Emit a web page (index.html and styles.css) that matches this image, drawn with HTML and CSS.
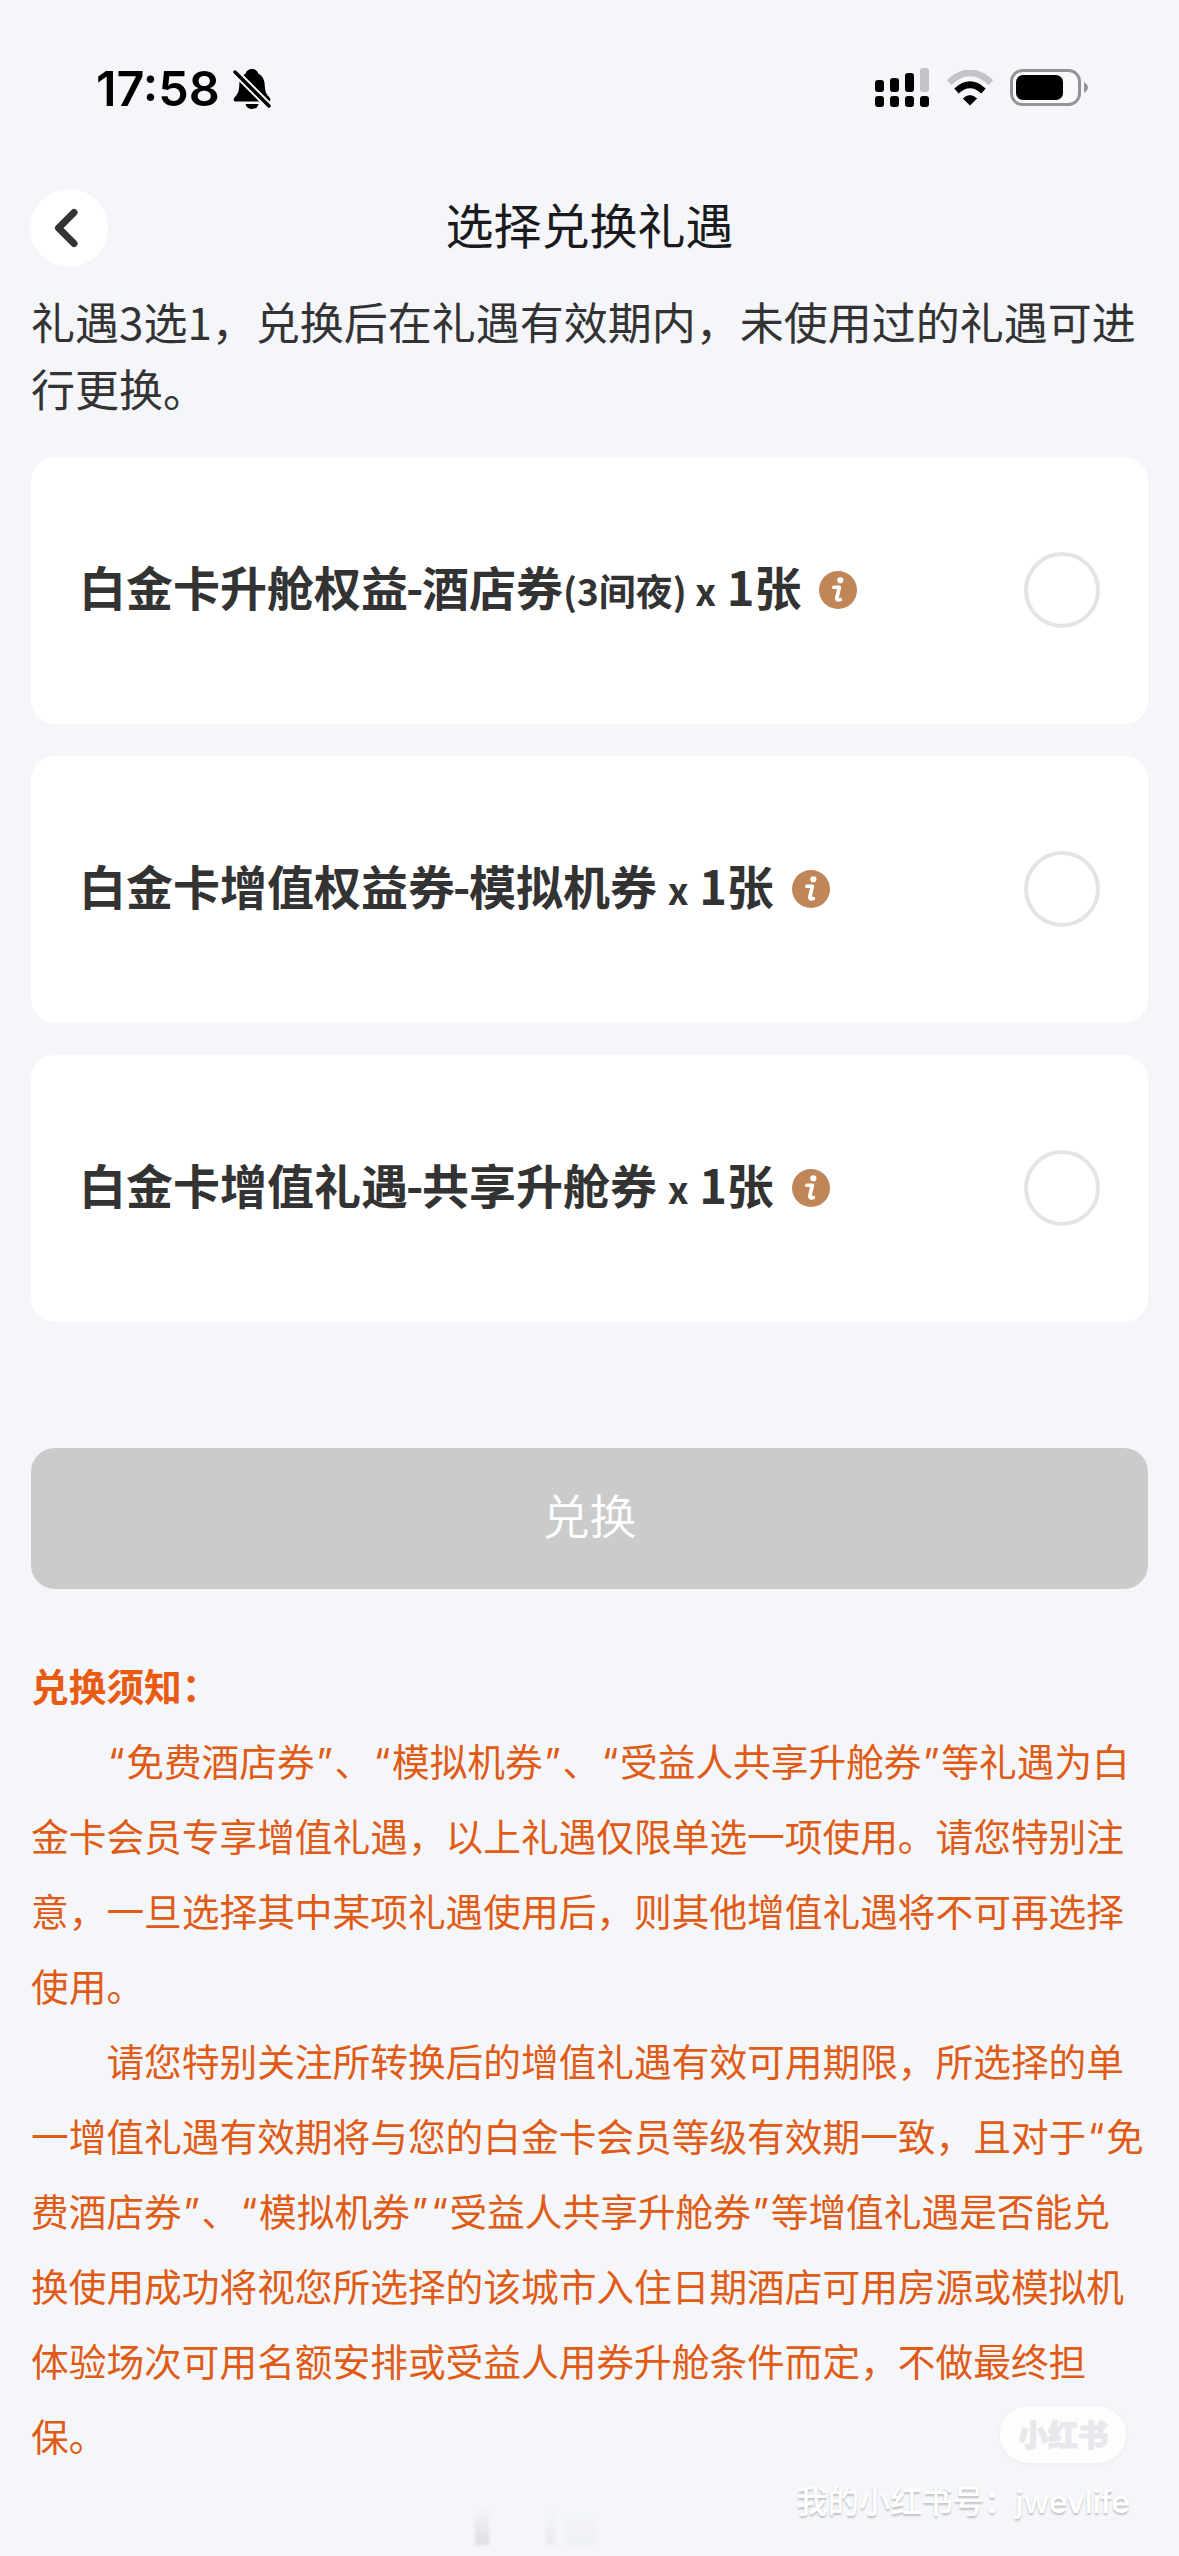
FILE: index.html
```html
<!DOCTYPE html>
<html lang="zh-CN">
<head>
<meta charset="utf-8">
<title>选择兑换礼遇</title>
<link rel="stylesheet" href="styles.css">
</head>
<body>
<svg width="0" height="0" class="defs">
  <symbol id="info" viewBox="0 0 37 37">
    <circle cx="18.500" cy="18.500" r="18.500" fill="#c18657"/>
    <circle cx="20.800" cy="9" r="3" fill="#fff"/>
    <path d="M14.500 15.800H19.800L17.300 26.500Q17.200 29 20.800 27.800" fill="none" stroke="#fff" stroke-width="3.600" stroke-linecap="round" stroke-linejoin="round"/>
  </symbol>
</svg>
<div class="screen">
  <div class="status">
    <div class="status-left">
      <span class="time">17:58</span>
      <svg class="bell" viewBox="0 0 38 42" width="38" height="42">
        <path d="M19 1c-3.600 0-5.800 2.200-6.200 4.600C8 8 6.500 12.500 6.300 17c-.3 6-1.300 8.500-4 11.500C-.5 31.500.5 33.500 3 33.500h32c2.500 0 3.500-2 .7-5-2.700-3-3.700-5.500-4-11.500-.2-4.500-1.700-9-6.500-11.400C24.800 3.200 22.600 1 19 1z"/>
        <path d="M12.500 36h13c-.8 3.300-3.200 5-6.500 5s-5.700-1.700-6.500-5z"/>
        <path d="M2 4 36 38" stroke="#f4f6fa" stroke-width="7.500"/>
        <path d="M2 4 36 38" stroke="#000" stroke-width="3.400" stroke-linecap="round"/>
      </svg>
    </div>
    <div class="status-right">
      <svg viewBox="0 0 54 40" width="54" height="40">
        <rect y="12" width="9" height="12" rx="3"/><rect x="15" y="10" width="9" height="14" rx="3"/><rect x="30" y="5" width="9" height="19" rx="3"/><rect x="45" y="0" width="9" height="24" rx="3" fill="#c3c4c7"/>
        <rect y="28" width="9" height="11" rx="3"/><rect x="15" y="28" width="9" height="11" rx="3"/><rect x="30" y="28" width="9" height="11" rx="3"/><rect x="45" y="28" width="9" height="11" rx="3"/>
      </svg>
      <svg class="wifi" viewBox="0 0 48 36" width="48" height="36">
        <path d="M3 12.500Q24-7 45 12.500" fill="none" stroke="#c3c4c7" stroke-width="6.500"/>
        <path d="M10.500 21Q24 8.500 37.500 21" fill="none" stroke="#000" stroke-width="6.500"/>
        <path d="M16.800 28.500Q24 21.500 31.200 28.500L24 35.500Z"/>
      </svg>
      <svg class="battery" viewBox="0 0 78 37" width="78" height="37">
        <rect x="1.500" y="1.500" width="68" height="34" rx="11" fill="#f9fafc" stroke="#929397" stroke-width="3"/>
        <rect x="6" y="6" width="47" height="25" rx="7"/>
        <path d="M74 13q4 3 4 5.500T74 24z" fill="#929397"/>
      </svg>
    </div>
  </div>

  <header class="nav">
    <div class="back">
      <svg viewBox="0 0 24 40" width="24" height="40"><path d="M20 4.500 4.500 20 20 35.500" fill="none" stroke="#333" stroke-width="7" stroke-linecap="round" stroke-linejoin="round"/></svg>
    </div>
    <h1 class="title">选择兑换礼遇</h1>
  </header>

  <p class="intro">礼遇3选1，兑换后在礼遇有效期内，未使用过的礼遇可进<br>行更换。</p>

  <div class="cards">
    <div class="card">
      <div class="name">白金卡升舱权益<span class="dash">-</span>酒店券<small>(3间夜) x</small> 1张</div>
      <svg class="info"><use href="#info"/></svg>
      <span class="radio"></span>
    </div>
    <div class="card">
      <div class="name">白金卡增值权益券<span class="dash">-</span>模拟机券 <small>x</small> 1张</div>
      <svg class="info"><use href="#info"/></svg>
      <span class="radio"></span>
    </div>
    <div class="card">
      <div class="name">白金卡增值礼遇<span class="dash">-</span>共享升舱券 <small>x</small> 1张</div>
      <svg class="info"><use href="#info"/></svg>
      <span class="radio"></span>
    </div>
  </div>

  <div class="submit">兑换</div>

  <section class="notice">
    <h2>兑换须知：</h2>
    <p class="indent"><q>“</q>免费酒店券<q>”</q>、<q>“</q>模拟机券<q>”</q>、<q>“</q>受益人共享升舱券<q>”</q>等礼遇为白<br>金卡会员专享增值礼遇，以上礼遇仅限单选一项使用。请您特别注<br>意，一旦选择其中某项礼遇使用后，则其他增值礼遇将不可再选择<br>使用。</p>
    <p class="indent">请您特别关注所转换后的增值礼遇有效可用期限，所选择的单<br>一增值礼遇有效期将与您的白金卡会员等级有效期一致，且对于<q>“</q>免<br>费酒店券<q>”</q>、<q>“</q>模拟机券<q>”</q><q>“</q>受益人共享升舱券<q>”</q>等增值礼遇是否能兑<br>换使用成功将视您所选择的该城市入住日期酒店可用房源或模拟机<br>体验场次可用名额安排或受益人用券升舱条件而定，不做最终担<br>保。</p>
  </section>

  <div class="watermark">
    <span class="pill">小红书</span>
    <span class="account">我的小红书号：<span class="id">jwevlife</span></span>
  </div>
  <div class="ghost"><i class="g1"></i><i class="g2"></i><i class="g3"></i></div>
</div>
</body>
</html>
```
FILE: styles.css
```css
* { box-sizing: border-box; }
body { margin: 0; background: #f4f6fa; }
h1, h2, p { margin: 0; font-weight: 400; }
svg { display: block; }
.defs { position: absolute; }

.screen {
  position: relative;
  width: 1179px;
  height: 2556px;
  padding: 0 31px;
  overflow: hidden;
  background: #f4f6fa;
  color: #333;
  font-family: "Noto Sans CJK SC", sans-serif;
}

.status {
  display: flex;
  justify-content: space-between;
  height: 189px;
  padding: 68px 60px 0 65px;
}
.status-left, .status-right { display: flex; align-items: flex-start; }
.time {
  width: 137px;
  margin-top: -7px;
  font: 600 48.5px/56px Inter, sans-serif;
  color: #000;
}
.wifi { margin: 2px 16px 0 17px; }
.battery { margin-top: 1px; }

.nav {
  display: grid;
  grid-template-columns: 77px 1fr 77px;
  align-items: center;
  height: 78px;
}
.back {
  display: flex;
  align-items: center;
  justify-content: center;
  width: 78px;
  height: 78px;
  margin-left: -1px;
  padding-right: 7px;
  border-radius: 50%;
  background: #fff;
}
.title {
  padding-bottom: 9px;
  font-size: 48px;
  line-height: 69px;
  text-align: center;
  color: #1a1a1c;
}

.intro {
  height: 190px;
  padding-top: 21px;
  font-size: 44px;
  line-height: 67px;
  white-space: nowrap;
}

.cards { display: grid; gap: 32px; }
.card {
  display: flex;
  align-items: center;
  height: 267px;
  padding: 0 48px 2px 48px;
  border-radius: 24px;
  background: #fff;
}
.name {
  padding-bottom: 4px;
  font-size: 47px;
  font-weight: 700;
  line-height: 68px;
  white-space: nowrap;
}
.name small { font-size: 37px; }
.dash { display: inline-block; width: 14px; text-indent: -2px; }
.info { width: 38px; height: 38px; margin-left: 18px; }
.radio {
  width: 76px;
  height: 76px;
  margin-left: auto;
  border: 4px solid #e4e4e4;
  border-radius: 50%;
}

.submit {
  height: 141px;
  margin-top: 126px;
  border-radius: 24px;
  background: #cbcbcb;
  color: #fff;
  font-size: 47px;
  font-weight: 350;
  line-height: 132px;
  text-align: center;
}

.notice {
  padding-top: 58px;
  color: #df5b16;
  font-size: 37.7px;
  line-height: 75px;
  white-space: nowrap;
}
.notice h2 { font-size: 37.7px; font-weight: 700; color: #e95b12; }
.indent { text-indent: 2em; }
.notice q {
  display: inline-block;
  width: 19.8px;
  line-height: 1;
  text-align: center;
  text-indent: 0;
  font-family: Inter, sans-serif;
}
.notice q::before, .notice q::after { content: none; }

.watermark {
  position: absolute;
  top: 2406px;
  right: 49px;
  display: flex;
  flex-direction: column;
  align-items: flex-end;
}
.pill {
  width: 126px;
  height: 57px;
  margin-right: 4px;
  border-radius: 29px;
  background: #fdfdfe;
  box-shadow: 0 1px 5px rgba(0, 0, 0, .05);
  color: #e7e8eb;
  font-size: 30px;
  font-weight: 900;
  line-height: 55px;
  text-align: center;
  -webkit-text-stroke: 1px #e7e8eb;
}
.account {
  margin-top: 16px;
  color: #fff;
  font-size: 31.3px;
  font-weight: 500;
  line-height: 42px;
  text-shadow: 0 2px 2px rgba(0, 0, 0, .22);
  white-space: nowrap;
}
.id { font-family: Inter, "Noto Sans CJK SC", sans-serif; }

.ghost { position: absolute; left: 475px; top: 2508px; display: flex; filter: blur(1.5px); }
.ghost i { height: 37px; background: linear-gradient(rgba(200, 201, 205, 0), #dcdde1); }
.g1 { width: 14px; }
.g2 { width: 9px; margin-left: 57px; opacity: .45; }
.g3 { width: 30px; margin-left: 11px; opacity: .25; }
```
